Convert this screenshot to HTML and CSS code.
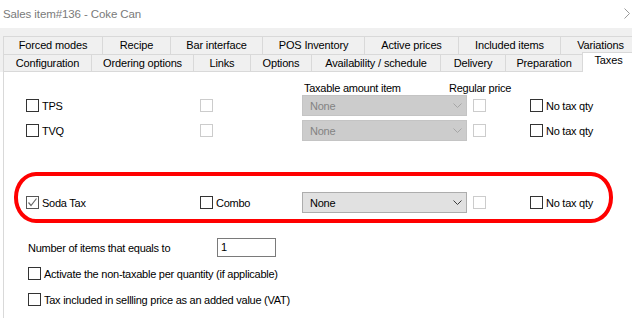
FILE: index.html
```html
<!DOCTYPE html>
<html lang="en">
<head>
    <meta charset="UTF-8">
    <meta name="viewport" content="width=device-width, initial-scale=1.0">
    <title>Sales item#136 - Coke Can</title>
    <link rel="stylesheet" href="styles.css">
</head>
<body>
    <!-- Window title -->
    <div class="titlebar">
        <span>Sales item#136 - Coke Can</span>
        <svg class="close" width="7" height="28" viewBox="0 0 7 28">
            <polyline points="0.5,8.5 5.5,13.5 0.5,18.5" fill="none" stroke="#9a9a9a" stroke-width="1"/>
        </svg>
    </div>

    <!-- Tabs, two rows -->
    <div class="tabstrip">
        <div class="tabrow row1">
            <div class="tab">Forced modes</div>
            <div class="tab">Recipe</div>
            <div class="tab">Bar interface</div>
            <div class="tab">POS Inventory</div>
            <div class="tab">Active prices</div>
            <div class="tab">Included items</div>
            <div class="tab">Variations</div>
        </div>
        <div class="tabrow row2">
            <div class="tab">Configuration</div>
            <div class="tab">Ordering options</div>
            <div class="tab">Links</div>
            <div class="tab">Options</div>
            <div class="tab">Availability / schedule</div>
            <div class="tab">Delivery</div>
            <div class="tab">Preparation</div>
            <div class="tab selected">Taxes</div>
        </div>
    </div>

    <!-- Taxes page -->
    <div class="panel">
        <div class="colheads">
            <span class="head-amount">Taxable amount item</span>
            <span>Regular price</span>
        </div>

        <div class="taxrows">
            <div class="taxrow">
                <label class="check"><span class="box"></span>TPS</label>
                <span class="box disabled"></span>
                <div class="combo disabled"><span>None</span>
                    <svg width="9" height="5" viewBox="0 0 9 5"><polyline points="0.5,0.5 4.5,4.5 8.5,0.5" fill="none" stroke="#a6a6a6"/></svg>
                </div>
                <span class="box disabled"></span>
                <label class="check"><span class="box"></span>No tax qty</label>
            </div>
            <div class="taxrow">
                <label class="check"><span class="box"></span>TVQ</label>
                <span class="box disabled"></span>
                <div class="combo disabled"><span>None</span>
                    <svg width="9" height="5" viewBox="0 0 9 5"><polyline points="0.5,0.5 4.5,4.5 8.5,0.5" fill="none" stroke="#a6a6a6"/></svg>
                </div>
                <span class="box disabled"></span>
                <label class="check"><span class="box"></span>No tax qty</label>
            </div>
        </div>

        <div class="taxrow soda">
            <label class="check">
                <span class="box checked">
                    <svg width="11" height="11" viewBox="0 0 11 11"><polyline points="1.5,5.5 4,8.5 9.5,1.5" fill="none" stroke="#6b6b6b" stroke-width="1.2"/></svg>
                </span>Soda Tax
            </label>
            <label class="check"><span class="box"></span>Combo</label>
            <div class="combo"><span>None</span>
                <svg width="9" height="5" viewBox="0 0 9 5"><polyline points="0.5,0.5 4.5,4.5 8.5,0.5" fill="none" stroke="#3c3c3c"/></svg>
            </div>
            <span class="box disabled"></span>
            <label class="check"><span class="box"></span>No tax qty</label>
        </div>

        <div class="qtyrow">
            <span class="qty-label">Number of items that equals to</span>
            <div class="textbox">1</div>
        </div>

        <label class="check option first"><span class="box"></span>Activate the non-taxable per quantity (if applicable)</label>
        <label class="check option"><span class="box"></span>Tax included in sellling price as an added value (VAT)</label>

        <!-- red highlight drawn over the Soda Tax row -->
        <div class="highlight"></div>
    </div>
</body>
</html>
```

FILE: styles.css
```css
body {
    margin: 0;
    width: 632px;
    height: 318px;
    overflow: hidden;
    background: #fff;
    font-family: "Liberation Sans", Arial, sans-serif;
    font-size: 11px;
    color: #000;
}

/* title bar */
.titlebar {
    height: 28px;
    display: flex;
    align-items: center;
    padding-left: 3px;
    font-size: 11.5px;
    letter-spacing: -0.1px;
    color: #7a7a7a;
}
.titlebar .close {
    margin-left: auto;
    margin-right: 1px;
}

/* tabs */
.tabstrip {
    background: #f0f0f0;
    padding: 8px 0 0 3px;
}
.tabrow {
    display: flex;
    height: 18px;
    white-space: nowrap;
}
.tab {
    flex: none;
    box-sizing: border-box;
    height: 18px;
    line-height: 17px;
    text-align: center;
    border-top: 1px solid #d9d9d9;
    border-left: 1px solid #d9d9d9;
    letter-spacing: -0.15px;
}
.row2 .tab {
    border-bottom: 1px solid #d9d9d9;
    line-height: 16px;
}
.row1 .tab:nth-child(1) { width: 99px; }
.row1 .tab:nth-child(2) { width: 68px; }
.row1 .tab:nth-child(3) { width: 92px; }
.row1 .tab:nth-child(4) { width: 102px; }
.row1 .tab:nth-child(5) { width: 94px; }
.row1 .tab:nth-child(6) { width: 102px; }
.row1 .tab:nth-child(7) { width: 80px; }
.row2 .tab:nth-child(1) { width: 88px; }
.row2 .tab:nth-child(2) { width: 102px; }
.row2 .tab:nth-child(3) { width: 57px; }
.row2 .tab:nth-child(4) { width: 61px; }
.row2 .tab:nth-child(5) { width: 129px; }
.row2 .tab:nth-child(6) { width: 65px; }
.row2 .tab:nth-child(7) { width: 77px; }
.row2 .tab.selected {
    width: 52px;
    height: 20px;
    margin-top: -2px;
    background: #fff;
    border-bottom: none;
    line-height: 15px;
}

/* page body */
.panel {
    position: relative;
    margin-left: 3px;
    height: 246px;
    border-left: 1px solid #d9d9d9;
    letter-spacing: -0.25px;
}
.colheads {
    display: flex;
    padding: 10px 0 0 300px;
    height: 13px;
    line-height: 13px;
}
.head-amount {
    width: 145px;
}

.taxrows {
    display: flex;
    flex-direction: column;
    gap: 4px;
}
.taxrow {
    display: grid;
    grid-template-columns: 174px 102px 171px 57px auto;
    align-items: center;
    height: 21px;
    padding-left: 22px;
}
.taxrow.soda {
    margin-top: 51px;
}

.check {
    display: flex;
    align-items: center;
    gap: 3px;
    white-space: nowrap;
}
.box {
    box-sizing: border-box;
    width: 13px;
    height: 13px;
    border: 1px solid #333;
    background: #fff;
    flex: none;
    display: flex;
}
.box.disabled {
    border-color: #cccccc;
}
.box.checked {
    border-color: #555;
}

.combo {
    box-sizing: border-box;
    width: 165px;
    height: 21px;
    display: flex;
    align-items: center;
    justify-content: space-between;
    padding: 0 4px 0 7px;
    background: #e1e1e1;
    border: 1px solid #adadad;
}
.combo.disabled {
    background: #cccccc;
    border-color: #c4c4c4;
    color: #838383;
}

.qtyrow {
    display: flex;
    align-items: center;
    margin-top: 25px;
    padding-left: 24px;
}
.qty-label {
    width: 189px;
}
.textbox {
    box-sizing: border-box;
    width: 59px;
    height: 19px;
    line-height: 17px;
    padding-left: 3px;
    border: 1px solid #7a7a7a;
}

.option {
    height: 13px;
    margin: 13px 0 0 24px;
}
.option.first {
    margin-top: 10px;
}

.highlight {
    position: absolute;
    left: 10px;
    top: 100px;
    width: 599px;
    height: 51px;
    box-sizing: border-box;
    border: 4px solid #ff0000;
    border-radius: 22px / 25px;
}
```
